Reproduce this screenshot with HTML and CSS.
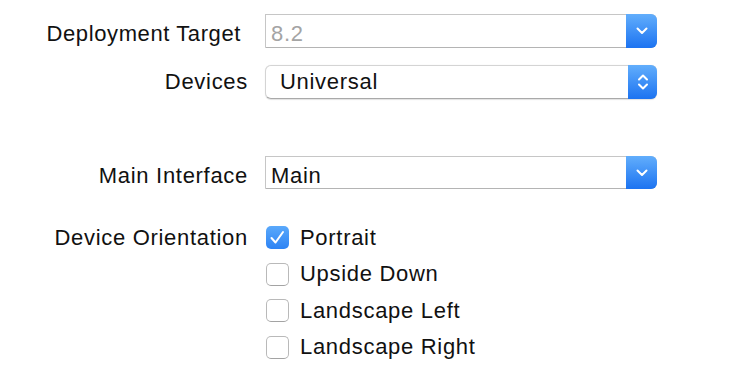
FILE: index.html
```html
<!DOCTYPE html>
<html lang="en">
<head>
    <meta charset="UTF-8">
    <title>Deployment Info</title>
    <link rel="stylesheet" href="styles.css">
</head>
<body>
    <div class="panel">
        <!-- Deployment target -->
        <div class="row row-target">
            <div class="label label-target">Deployment Target</div>
            <div class="combo disabled">
                <span class="value">8.2</span>
                <span class="arrow">
                    <svg width="12" height="8" viewBox="0 0 12 8"><path d="M1.5 1.5 L6 6 L10.5 1.5" fill="none" stroke="#fff" stroke-width="2" stroke-linecap="round" stroke-linejoin="round"/></svg>
                </span>
            </div>
        </div>

        <div class="row row-devices">
            <div class="label">Devices</div>
            <div class="popup">
                <span class="value">Universal</span>
                <span class="arrow">
                    <svg width="12" height="20" viewBox="0 0 12 20"><path d="M2 7.5 L6 3.5 L10 7.5 M2 12.5 L6 16.5 L10 12.5" fill="none" stroke="#fff" stroke-width="2" stroke-linecap="round" stroke-linejoin="round"/></svg>
                </span>
            </div>
        </div>

        <div class="row row-main">
            <div class="label">Main Interface</div>
            <div class="combo">
                <span class="value">Main</span>
                <span class="arrow">
                    <svg width="12" height="8" viewBox="0 0 12 8"><path d="M1.5 1.5 L6 6 L10.5 1.5" fill="none" stroke="#fff" stroke-width="2" stroke-linecap="round" stroke-linejoin="round"/></svg>
                </span>
            </div>
        </div>

        <!-- Orientation -->
        <div class="row row-orientation">
            <div class="label label-orientation">Device Orientation</div>
            <div class="checks">
                <div class="check">
                    <span class="box checked">
                        <svg width="23" height="23" viewBox="0 0 23 23"><path d="M5.5 12 L9.5 16.5 L17 6" fill="none" stroke="#fff" stroke-width="2" stroke-linecap="round" stroke-linejoin="round"/></svg>
                    </span>
                    <span class="check-text">Portrait</span>
                </div>
                <div class="check">
                    <span class="box"></span>
                    <span class="check-text">Upside Down</span>
                </div>
                <div class="check">
                    <span class="box"></span>
                    <span class="check-text">Landscape Left</span>
                </div>
                <div class="check">
                    <span class="box"></span>
                    <span class="check-text">Landscape Right</span>
                </div>
            </div>
        </div>
    </div>
</body>
</html>
```

FILE: styles.css
```css
body {
    margin: 0;
    background-color: #ffffff;
    font-family: "Liberation Sans", Arial, sans-serif;
    font-size: 22px;
    letter-spacing: 0.7px;
    color: #111111;
}

.panel {
    padding-top: 14px;
}

.row {
    display: flex;
    align-items: center;
}

.row-devices {
    margin-top: 17px;
}

.row-main {
    margin-top: 57px;
}

.row-orientation {
    margin-top: 37px;
    align-items: flex-start;
}

.label {
    width: 248px;
    margin-right: 17px;
    text-align: right;
    white-space: nowrap;
}

.label-target {
    width: 241px;
    margin-right: 24px;
    letter-spacing: 0.6px;
}

/* combo text sits a little low in its field */
.row-target .label,
.row-main .label,
.combo .value {
    padding-top: 6px;
}

.label-orientation {
    line-height: 23px;
}

/* popups and combo boxes */
.combo, .popup {
    display: flex;
    align-items: stretch;
    width: 392px;
    height: 34px;
    box-sizing: border-box;
    border: 1px solid #c6c6c6;
    border-bottom-color: #b4b4b4;
    background-color: #ffffff;
}

.combo {
    border-radius: 0 6px 6px 0;
}

.row-main .combo {
    height: 33px;
}

.popup {
    border-radius: 6px;
    border-color: #d4d4d4;
    border-bottom-color: #a9a9a9;
    box-shadow: 0 0.5px 1px rgba(0, 0, 0, 0.12);
}

.value {
    flex: 1;
    display: flex;
    align-items: center;
    padding-left: 5px;
}

.popup .value {
    padding-left: 14px;
}

.disabled .value {
    color: #a4a4a4;
}

.arrow {
    width: 31px;
    margin: -1px -1px -1px 0;
    display: flex;
    align-items: center;
    justify-content: center;
    border-radius: 0 6px 6px 0;
    background: linear-gradient(#62aefc, #1c73f1);
}

.popup .arrow {
    width: 29px;
}

/* checkboxes */
.checks {
    display: flex;
    flex-direction: column;
    gap: 13.5px;
}

.check {
    display: flex;
    align-items: center;
    height: 23px;
}

.box {
    width: 23px;
    height: 23px;
    box-sizing: border-box;
    margin-left: 1px;
    margin-right: 11px;
    border: 1px solid #b9b9b9;
    border-bottom-color: #a3a3a3;
    border-radius: 5px;
    background-color: #ffffff;
    display: flex;
    align-items: center;
    justify-content: center;
}

.box.checked {
    border: none;
    background: linear-gradient(#5aa9fb, #2d83f4);
}

.check-text {
    white-space: nowrap;
}
```
